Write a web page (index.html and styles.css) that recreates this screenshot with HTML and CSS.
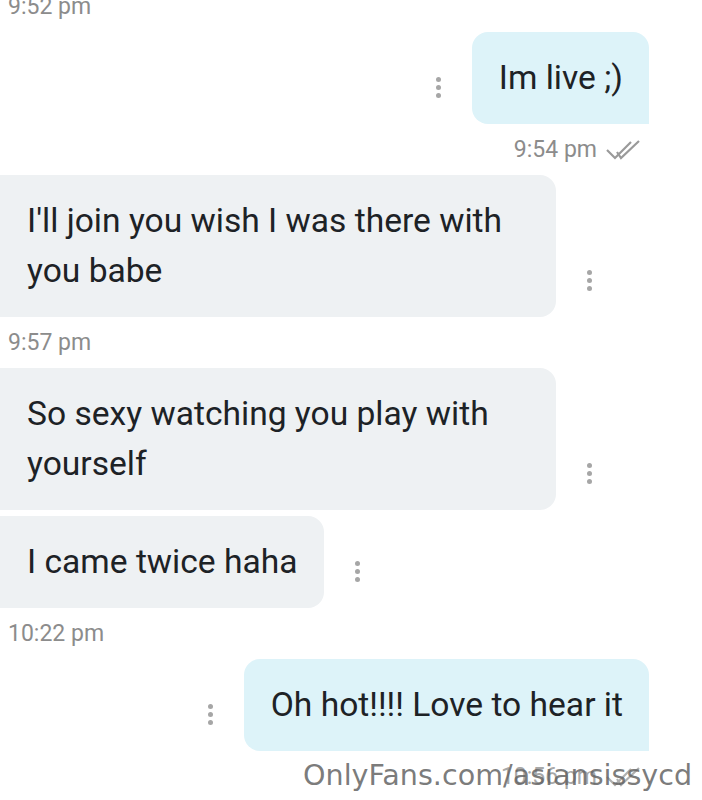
FILE: index.html
```html
<!DOCTYPE html>
<html>
<head>
<meta charset="utf-8">
<link rel="stylesheet" href="styles.css">
</head>
<body>
<div class="chat">
  <div class="time time-recv time-first">9:52 pm</div>

  <div class="row row-sent">
    <span class="kebab"><i></i><i></i><i></i></span>
    <div class="bubble bubble-sent">Im live ;)</div>
  </div>
  <div class="time time-sent">9:54 pm
    <svg class="ticks" width="38" height="22" viewBox="0 0 38 22"><polyline points="2,11 10,19 26,3" fill="none" stroke="#9a9a9a" stroke-width="2.2"/><polyline points="12,13 16,19 34,2" fill="none" stroke="#9a9a9a" stroke-width="2.2"/></svg>
  </div>

  <div class="row row-recv">
    <div class="bubble bubble-recv">I'll join you wish I was there with you babe</div>
    <span class="kebab"><i></i><i></i><i></i></span>
  </div>
  <div class="time time-recv">9:57 pm</div>

  <div class="row row-recv">
    <div class="bubble bubble-recv">So sexy watching you play with yourself</div>
    <span class="kebab"><i></i><i></i><i></i></span>
  </div>
  <div class="row row-recv row-tight">
    <div class="bubble bubble-recv">I came twice haha</div>
    <span class="kebab"><i></i><i></i><i></i></span>
  </div>
  <div class="time time-recv">10:22 pm</div>

  <div class="row row-sent">
    <span class="kebab"><i></i><i></i><i></i></span>
    <div class="bubble bubble-sent">Oh hot!!!! Love to hear it</div>
  </div>
  <div class="time time-sent time-last">10:56 pm
    <svg class="ticks" width="38" height="22" viewBox="0 0 38 22"><polyline points="2,11 10,19 26,3" fill="none" stroke="#b0b0b0" stroke-width="2.2"/><polyline points="12,13 16,19 34,2" fill="none" stroke="#b0b0b0" stroke-width="2.2"/></svg>
  </div>

  <div class="watermark">OnlyFans.com/asiansissycd</div>
</div>
</body>
</html>
```
FILE: styles.css
```css
html, body {
  margin: 0;
  padding: 0;
  background: #ffffff;
}
body {
  width: 702px;
  height: 800px;
  overflow: hidden;
  font-family: Roboto, "Liberation Sans", sans-serif;
}
.chat {
  position: relative;
  display: flex;
  flex-direction: column;
  width: 702px;
  height: 800px;
}
.time {
  height: 51px;
  line-height: 51px;
  font-size: 23px;
  color: #8c8c8c;
  flex-shrink: 0;
}
.time-first {
  margin-top: -19px;
}
.time-recv {
  padding-left: 8px;
}
.time-sent {
  display: flex;
  align-items: center;
  justify-content: flex-end;
  gap: 8px;
  padding-right: 59px;
}
.time-last {
  color: #a8a8a8;
}
.ticks {
  display: block;
}
.row {
  display: flex;
  align-items: flex-end;
  gap: 31px;
  flex-shrink: 0;
}
.row-sent {
  justify-content: flex-end;
  padding-right: 53px;
}
.row-tight {
  margin-top: 6px;
}
.bubble {
  font-size: 33.6px;
  line-height: 50px;
  color: #1d2226;
  padding: 21px 26px 21px 27px;
}
.bubble-sent {
  background: #ddf3f9;
  border-radius: 16px 16px 0 16px;
}
.bubble-recv {
  background: #eef1f3;
  border-radius: 0 16px 16px 0;
  max-width: 556px;
  box-sizing: border-box;
}
.kebab {
  display: flex;
  flex-direction: column;
  gap: 3px;
  margin-bottom: 26px;
}
.kebab i {
  display: block;
  width: 5px;
  height: 5px;
  border-radius: 50%;
  background: #a6a6a6;
}
.watermark {
  position: absolute;
  left: 303px;
  top: 755px;
  font-family: "DejaVu Sans", sans-serif;
  font-size: 28.6px;
  line-height: 40px;
  color: rgba(100, 100, 100, 0.85);
  white-space: nowrap;
}
```
